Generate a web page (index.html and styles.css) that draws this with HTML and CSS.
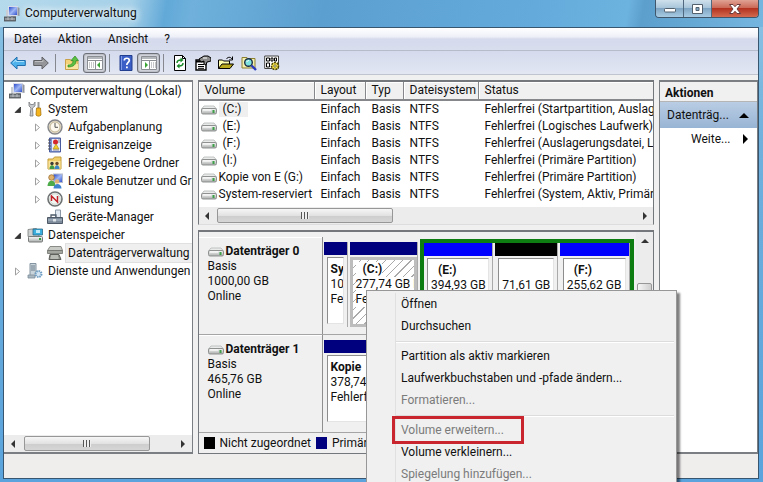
FILE: index.html
```html
<!DOCTYPE html>
<html lang="de">
<head>
    <meta charset="UTF-8">
    <meta name="viewport" content="width=device-width, initial-scale=1.0">
    <title>Computerverwaltung</title>
    <link rel="stylesheet" href="styles.css">
</head>
<body>
    <!-- shared icons -->
    <svg class="sprite" aria-hidden="true">
        <defs>
            <linearGradient id="metal" x1="0" y1="0" x2="0" y2="1">
                <stop offset="0" stop-color="#fafafa"/>
                <stop offset="1" stop-color="#a9abab"/>
            </linearGradient>
            <linearGradient id="sky" x1="0" y1="0" x2="1" y2="1">
                <stop offset="0" stop-color="#1d3fc4"/>
                <stop offset="0.5" stop-color="#9fb6f5"/>
                <stop offset="1" stop-color="#2546c8"/>
            </linearGradient>
        </defs>
        <symbol id="drive" viewBox="0 0 16 10">
            <path d="M3 1h10l2.500 3H.5z" fill="#e9eaea" stroke="#b4b6b6" stroke-width=".8"/>
            <rect x=".5" y="3.500" width="15" height="5.500" rx="1.500" fill="url(#metal)" stroke="#8f9191"/>
            <rect x="11.500" y="5" width="2" height="3" fill="#3fa04a"/>
            <path d="M2 5h8" stroke="#fff"/>
        </symbol>
        <symbol id="computer" viewBox="0 0 16 16">
            <rect x="4.500" y=".5" width="9" height="9" fill="url(#sky)" stroke="#d8dcea"/>
            <path d="M13.500 1l2 1v8l-2-.5z" fill="#8f949e"/>
            <path d="M7 10h5v2H7z" fill="#9a9fa8"/>
            <path d="M2 4h2v7H2z" fill="#c9cdd4"/>
            <rect x=".5" y="11" width="11" height="4" fill="#70757a" stroke="#4d5255" stroke-width=".8"/>
            <path d="M1 13h10M4 11v3M8 11v3" stroke="#c8ccce" stroke-width=".8"/>
        </symbol>
    </svg>

    <div class="window">
        <header class="titlebar">
            <svg class="icon"><use href="#computer"/></svg>
            <h1 class="title">Computerverwaltung</h1>
            <div class="window-buttons">
                <button class="win-btn" aria-label="Minimieren"><svg width="14" height="10" viewBox="0 0 14 10"><rect x="1.500" y="4.500" width="11" height="3.500" rx="1" fill="#fff" stroke="#53606e"/></svg></button>
                <button class="win-btn" aria-label="Maximieren"><svg width="14" height="12" viewBox="0 0 14 12"><path fill-rule="evenodd" d="M1.500 1.500h10v9h-10zM5 4.500h3v3H5z" fill="#fff" stroke="#53606e"/></svg></button>
                <button class="win-btn win-close" aria-label="Schließen"><svg width="14" height="12" viewBox="0 0 14 12"><path d="M1.500 1.500h3.500L7 3.700l2-2.200h3.500L9 6l3.500 4.500H9L7 8.300l-2 2.200H1.500L5 6z" fill="#fff" stroke="#6b3a3a"/></svg></button>
            </div>
        </header>

        <div class="client">
            <nav class="menubar">
                <button>Datei</button>
                <button>Aktion</button>
                <button>Ansicht</button>
                <button>?</button>
            </nav>

            <div class="toolbar">
                <button class="tool" aria-label="Zurück"><svg class="icon" viewBox="0 0 16 16"><path d="M.7 8L7 2v3.500h8.300v5H7V14z" fill="#4fb2ea" stroke="#1f6fae"/><path d="M3 7.500L6 5v1.500h8" fill="none" stroke="#a9e0fb"/></svg></button>
                <button class="tool" aria-label="Vorwärts"><svg class="icon" viewBox="0 0 16 16"><path d="M15.300 8L9 2v3.500H.7v5H9V14z" fill="#949699" stroke="#5f6164"/><path d="M2 6.500h8V5" fill="none" stroke="#bcbec0"/></svg></button>
                <span class="tool-sep"></span>
                <button class="tool" aria-label="Nach oben"><svg class="icon" viewBox="0 0 16 16"><path d="M1.500 4.500h5l1 1.500h6.500v8.500h-12.500z" fill="#f3d27a" stroke="#c9a14a"/><path d="M2 9h12v5H2z" fill="#fbe6a3"/><path d="M4 10c4 0 5-2 5-4.500H7L11 1l3.500 4.500H12C12 10 9 12 4 12z" fill="#5cc043" stroke="#2f8a22" stroke-width=".7"/></svg></button>
                <button class="tool pressed" aria-label="Konsolenstruktur"><svg class="icon" viewBox="0 0 16 16"><path d="M.5 1.500h15v13H.5z" fill="#fff" stroke="#8b8e92"/><path d="M1 2h14v2H1z" fill="#b4b8bd"/><path d="M1 5.500h14M8.500 6v8" stroke="#8b8e92"/><path d="M2 8h5M2 10h5M2 12h5" stroke="#8b8e92" stroke-dasharray="1 1"/><path d="M13 7v6l-3-3z" fill="#3aa535"/></svg></button>
                <span class="tool-sep"></span>
                <button class="tool" aria-label="Hilfe"><svg class="icon" viewBox="0 0 16 16"><path d="M2 .5h12v15H2z" fill="#3b5fc6" stroke="#223f8f"/><path d="M3.500 1v14" stroke="#7f9ae6"/><path d="M6.300 5.500c0-3 5-3 5 0 0 1.800-2.500 2-2.500 4.500" fill="none" stroke="#fff" stroke-width="1.700"/><path d="M8 11.500h1.800v1.800H8z" fill="#fff"/></svg></button>
                <button class="tool pressed" aria-label="Aktionsbereich"><svg class="icon" viewBox="0 0 16 16"><path d="M.5 1.500h15v13H.5z" fill="#fff" stroke="#8b8e92"/><path d="M1 2h14v2H1z" fill="#b4b8bd"/><path d="M1 5.500h14M8.500 6v8" stroke="#8b8e92"/><path d="M10 8h5M10 10h5M10 12h5" stroke="#8b8e92" stroke-dasharray="1 1"/><path d="M4 7v6l3-3z" fill="#3aa535"/></svg></button>
                <span class="tool-sep"></span>
                <button class="tool" aria-label="Aktualisieren"><svg class="icon" viewBox="0 0 16 16"><path d="M2.500.5h8l3 3v12h-11z" fill="#fff" stroke="#000"/><path d="M10.500.5v3h3" fill="none" stroke="#000"/><path d="M5 8c0-2.500 2-3 4-3M11 8c0 2.500-2 3-4 3" fill="none" stroke="#1c8b2c" stroke-width="1.500"/><path d="M8.500 2.500v5l3-2.500zM7.500 8.500v5l-3-2.500z" fill="#1c8b2c"/></svg></button>
                <button class="tool" aria-label="Eigenschaften"><svg class="icon" viewBox="0 0 16 16"><path d="M1 5h10v10H1z" fill="#fff" stroke="#000" stroke-width="1.400"/><path d="M1 6.500h10" stroke="#000" stroke-width="2"/><path d="M3 9.500h6M3 11.500h6M3 13.300h6" stroke="#000"/><path d="M4 4l5-3h4l3 2v3l-4 1-1 3-2-1V6l-3 1z" fill="#8c8c8c" stroke="#000"/><path d="M8 3h4" stroke="#fff"/></svg></button>
                <button class="tool" aria-label="Öffnen"><svg class="icon" viewBox="0 0 16 16"><path d="M.5 13.500V5h4l1 1h6v3" fill="#ffffb0" stroke="#000"/><path d="M.5 13.500L4 9h11.500L12 13.500z" fill="#b9a91c" stroke="#000"/><path d="M8.500 4c1-2 4-2.500 5.500 0M14.500 1.500V5H11" fill="none" stroke="#000"/></svg></button>
                <button class="tool" aria-label="Suchen"><svg class="icon" viewBox="0 0 16 16"><path d="M1 2.500h5l1 1h7v9.500H1z" fill="#f4efae" stroke="#8d8130"/><circle cx="7.500" cy="7.500" r="3.800" fill="#7fe3e0" stroke="#1b2f47" stroke-width="1.400"/><path d="M6 7c0-1 1-1.500 2-1.500" stroke="#fff" fill="none"/><path d="M10.500 10.500l4.500 4.500" stroke="#2b3bbd" stroke-width="2.400"/></svg></button>
                <button class="tool" aria-label="Einstellungen"><svg class="icon" viewBox="0 0 16 16"><path d="M.7 1h13.800v12.500H.7z" fill="#fff" stroke="#444"/><path d="M2.500 3h3v3h-3zM7 3h2v3H7zM10.500 3h2v3h-2zM2.500 8h3v4h-3z" fill="#fff" stroke="#000"/><circle cx="11" cy="11" r="3.500" fill="#f5e34b" stroke="#4a4200" stroke-dasharray="2 1" stroke-width="1.600"/><circle cx="11" cy="11" r="1.200" fill="#fff" stroke="#4a4200" stroke-width=".7"/></svg></button>
            </div>

            <main class="panes">
                <!-- console tree -->
                <section class="pane tree-pane">
                    <ul class="tree">
                        <li class="node root"><svg class="icon"><use href="#computer"/></svg><span>Computerverwaltung (Lokal)</span></li>
                        <li class="node"><i class="twisty open"></i><svg class="icon" viewBox="0 0 16 16"><path d="M2 1v4l2 2-1 8h3l-.5-8L8 5V1L6.500 3.500h-3z" fill="#c7cacd" stroke="#77797c" stroke-width=".8"/><path d="M10.500 1h2v6h-2z" fill="#999"/><path d="M9.500 7h4l.5 7c-1 1.500-4 1.500-5 0z" fill="#f5b51e" stroke="#a9730a" stroke-width=".8"/></svg><span>System</span></li>
                        <li class="node deep"><i class="twisty"></i><svg class="icon" viewBox="0 0 16 16"><circle cx="8" cy="8" r="7" fill="#e3dccb" stroke="#85868a" stroke-width="1.400"/><circle cx="8" cy="8" r="5" fill="#fdf9ee" stroke="#c3b594"/><path d="M8 4v4.300h3" fill="none" stroke="#555"/></svg><span>Aufgabenplanung</span></li>
                        <li class="node deep"><i class="twisty"></i><svg class="icon" viewBox="0 0 16 16"><path d="M2.500 1h11v14h-11z" fill="#7d93d4" stroke="#4b5c9e"/><path d="M5 2h8v12H5z" fill="#e8edfa"/><path d="M1 3h3M1 6h3M1 9h3M1 12h3" stroke="#505050"/><path d="M6 13h6M11 3h2M11 5h2" stroke="#889"/><circle cx="8.500" cy="5" r="2.500" fill="#d4262c"/><path d="M9 7l3 5H6z" fill="#f2cb2e" stroke="#a98a10" stroke-width=".6"/></svg><span>Ereignisanzeige</span></li>
                        <li class="node deep"><i class="twisty"></i><svg class="icon" viewBox="0 0 16 16"><path d="M1 4h5l1.500-2H14v12H1z" fill="#f0ce6a" stroke="#c39a39"/><path d="M1.500 6h12v8h-12z" fill="#fae39a"/><circle cx="5" cy="8.500" r="1.700" fill="#3c3c38"/><circle cx="10" cy="8.500" r="1.700" fill="#6d4a25"/><path d="M2.500 14c0-5 5-5 5 0z" fill="#3f9b45"/><path d="M7.500 14c0-5 5-5 5 0z" fill="#3d87c9"/></svg><span>Freigegebene Ordner</span></li>
                        <li class="node deep"><i class="twisty"></i><svg class="icon" viewBox="0 0 16 16"><rect x="6.500" y="1" width="9" height="8.500" fill="url(#sky)" stroke="#b6bccb"/><circle cx="4.500" cy="4.500" r="2.800" fill="#e1b36d" stroke="#8f6428" stroke-width=".7"/><path d="M.5 13c0-7 8-7 8 0z" fill="#4dab49"/><circle cx="10" cy="8.500" r="2.300" fill="#dfb279"/><path d="M6.500 15.500c0-6 8-6 8 0z" fill="#3f83cf"/></svg><span>Lokale Benutzer und Gruppen</span></li>
                        <li class="node deep"><i class="twisty"></i><svg class="icon" viewBox="0 0 16 16"><circle cx="8" cy="8" r="7" fill="#fff" stroke="#6e7272" stroke-width="1.600"/><circle cx="8" cy="8" r="5.300" fill="#f3f7f3" stroke="#b6c1b6" stroke-width=".7"/><path d="M4.500 10V5l6 6V5" fill="none" stroke="#c22026" stroke-width="1.500"/></svg><span>Leistung</span></li>
                        <li class="node deep"><i class="twisty none"></i><svg class="icon" viewBox="0 0 16 16"><path d="M8.500 1h5v8h-5z" fill="#dfe7f1" stroke="#8a97a5"/><path d="M4 9V6h5v3" fill="none" stroke="#4e5b69" stroke-width="1.300"/><path d="M.5 8.500h15v6H.5z" fill="#7d8b9b" stroke="#4d5966"/><path d="M1 11h14" stroke="#b7c4d0"/><path d="M6 10h3v2.500H6z" fill="#dfe4e8"/></svg><span>Geräte-Manager</span></li>
                        <li class="node"><i class="twisty open"></i><svg class="icon" viewBox="0 0 16 16"><path d="M1 2.500l8-1 3 2v6H1z" fill="#cdd0cf" stroke="#777b7a" stroke-width=".8"/><path d="M6 2h9.500v6H6z" fill="#3bb0df" stroke="#2a6a88" stroke-width=".8"/><path d="M9 3h4v3H9z" fill="#bfeafa"/><rect x="1.500" y="9.500" width="14" height="5.500" rx="1" fill="url(#metal)" stroke="#777b7a"/><path d="M12 12h2" stroke="#2f9e3d" stroke-width="2"/></svg><span>Datenspeicher</span></li>
                        <li class="node deep"><i class="twisty none"></i><svg class="icon" viewBox="0 0 16 16"><path d="M3 1.500h11l1.500 4H.5z" fill="#c9cbc7" stroke="#8a8c87"/><path d="M.5 5.500h15v3H.5z" fill="#a3a59f" stroke="#6f716c" stroke-width=".8"/><path d="M3 9.500h9l2 5H2z" fill="#8d9089" stroke="#5f615c"/><path d="M4 11h7M3.500 13h8" stroke="#e4e6e0"/></svg><span class="current">Datenträgerverwaltung</span></li>
                        <li class="node"><i class="twisty"></i><svg class="icon" viewBox="0 0 16 16"><path d="M3 .5h6v12H3z" fill="#c9d3da" stroke="#8494a0"/><path d="M4 3h4M4 5h4M4 7h4" stroke="#6c7f8d"/><path d="M1 12h7v3H1z" fill="#aab8c2" stroke="#7c8d99" stroke-width=".8"/><circle cx="11.500" cy="11" r="3" fill="#d4e6f4" stroke="#6f9cc0" stroke-width="2" stroke-dasharray="1.500 .8"/></svg><span>Dienste und Anwendungen</span></li>
                    </ul>
                    <div class="hscroll">
                        <button class="arrow left" aria-label="Nach links"></button>
                        <div class="track"><span class="thumb tree-thumb"></span></div>
                        <button class="arrow right" aria-label="Nach rechts"></button>
                    </div>
                </section>

                <div class="center">
                    <!-- volume list -->
                    <section class="volume-pane">
                        <div class="table-wrap">
                            <table class="volumes">
                                <thead>
                                    <tr><th class="c-volume">Volume</th><th class="c-layout">Layout</th><th class="c-typ">Typ</th><th class="c-fs">Dateisystem</th><th>Status</th></tr>
                                </thead>
                                <tbody>
                                    <tr><td><svg class="drive"><use href="#drive"/></svg><span class="letter current">(C:)</span></td><td>Einfach</td><td>Basis</td><td>NTFS</td><td>Fehlerfrei (Startpartition, Auslagerungsdatei)</td></tr>
                                    <tr><td><svg class="drive"><use href="#drive"/></svg><span class="letter">(E:)</span></td><td>Einfach</td><td>Basis</td><td>NTFS</td><td>Fehlerfrei (Logisches Laufwerk)</td></tr>
                                    <tr><td><svg class="drive"><use href="#drive"/></svg><span class="letter">(F:)</span></td><td>Einfach</td><td>Basis</td><td>NTFS</td><td>Fehlerfrei (Auslagerungsdatei, Logisches Laufwerk)</td></tr>
                                    <tr><td><svg class="drive"><use href="#drive"/></svg><span class="letter">(I:)</span></td><td>Einfach</td><td>Basis</td><td>NTFS</td><td>Fehlerfrei (Primäre Partition)</td></tr>
                                    <tr><td><svg class="drive"><use href="#drive"/></svg><span>Kopie von E (G:)</span></td><td>Einfach</td><td>Basis</td><td>NTFS</td><td>Fehlerfrei (Primäre Partition)</td></tr>
                                    <tr><td><svg class="drive"><use href="#drive"/></svg><span>System-reserviert</span></td><td>Einfach</td><td>Basis</td><td>NTFS</td><td>Fehlerfrei (System, Aktiv, Primäre Partition)</td></tr>
                                </tbody>
                            </table>
                        </div>
                        <div class="hscroll">
                            <button class="arrow left" aria-label="Nach links"></button>
                            <div class="track"><span class="thumb list-thumb"></span></div>
                            <button class="arrow right" aria-label="Nach rechts"></button>
                        </div>
                    </section>

                    <!-- graphical disk view -->
                    <section class="disk-pane">
                        <div class="disk-area">
                            <div class="disks">
                                <article class="disk">
                                    <div class="disk-label">
                                        <h2><svg class="drive"><use href="#drive"/></svg>Datenträger 0</h2>
                                        <p>Basis</p>
                                        <p>1000,00 GB</p>
                                        <p>Online</p>
                                    </div>
                                    <div class="parts">
                                        <div class="part primary p-system"><div class="box"><b>System-reserviert</b><p>100 MB NTFS</p><p>Fehlerfrei</p></div></div>
                                        <div class="part primary p-c selected"><div class="box"><b class="drive-letter">(C:)</b><p>277,74 GB NTFS</p><p>Fehlerfrei</p></div></div>
                                        <div class="extended">
                                            <div class="part logical p-e"><div class="box"><b class="drive-letter">(E:)</b><p>394,93 GB</p></div></div>
                                            <div class="part free p-free"><div class="box"><b>&nbsp;</b><p>71,61 GB</p></div></div>
                                            <div class="part logical p-f"><div class="box"><b class="drive-letter">(F:)</b><p>255,62 GB</p></div></div>
                                        </div>
                                    </div>
                                </article>
                                <article class="disk">
                                    <div class="disk-label">
                                        <h2><svg class="drive"><use href="#drive"/></svg>Datenträger 1</h2>
                                        <p>Basis</p>
                                        <p>465,76 GB</p>
                                        <p>Online</p>
                                    </div>
                                    <div class="parts">
                                        <div class="part primary p-copy"><div class="box"><b>Kopie</b><p>378,74 GB</p><p>Fehlerfrei</p></div></div>
                                    </div>
                                </article>
                            </div>
                            <div class="vscroll">
                                <button class="arrow up" aria-label="Nach oben"></button>
                                <span class="vthumb"></span>
                            </div>
                        </div>
                        <div class="legend">
                            <span class="key key-free"></span>Nicht zugeordnet
                            <span class="key key-primary"></span>Primäre Partition
                        </div>
                    </section>
                </div>

                <!-- actions -->
                <aside class="pane actions">
                    <h2 class="actions-title">Aktionen</h2>
                    <button class="action-head">Datenträg...<i class="tri-up"></i></button>
                    <button class="action-item">Weite...<i class="tri-right"></i></button>
                </aside>
            </main>

            <footer class="statusbar"></footer>
        </div>
    </div>

    <div class="context-menu" role="menu">
        <button role="menuitem">Öffnen</button>
        <button role="menuitem">Durchsuchen</button>
        <hr>
        <button role="menuitem">Partition als aktiv markieren</button>
        <button role="menuitem">Laufwerkbuchstaben und -pfade ändern...</button>
        <button role="menuitem" disabled>Formatieren...</button>
        <hr>
        <button role="menuitem" class="marked" disabled>Volume erweitern...</button>
        <button role="menuitem">Volume verkleinern...</button>
        <button role="menuitem" disabled>Spiegelung hinzufügen...</button>
    </div>
</body>
</html>
```
FILE: styles.css
```css
* {
    box-sizing: border-box;
}
body {
    margin: 0;
    height: 100vh;
    position: relative;
    overflow: hidden;
    font-family: Roboto, "Open Sans", sans-serif;
    font-size: 12px;
    line-height: 15px;
    color: #111;
}
button {
    font: inherit;
    color: inherit;
    background: none;
    border: 0;
    padding: 0;
}
h1, h2, p, ul {
    margin: 0;
    padding: 0;
    font-size: inherit;
}
.sprite {
    position: absolute;
    width: 0;
    height: 0;
}
.icon {
    width: 16px;
    height: 16px;
    flex: none;
}
.drive {
    width: 16px;
    height: 10px;
    flex: none;
}

/* window frame */
.window {
    height: 100%;
    display: flex;
    flex-direction: column;
    padding: 0 4px 3px 3px;
    background: linear-gradient(#8cc3e4, #6fb0dd 30%, #5aa3dc);
}
.titlebar {
    height: 27px;
    flex: none;
    display: flex;
    align-items: center;
    gap: 5px;
    margin: 0 -4px 0 -3px;
    padding: 0 4px;
    background: linear-gradient(100deg, #b5daec, #a5d0e8 130px, #62a9d8 165px, #6fb1dc 190px, #5b9fd0 320px, #64abdc 70%, #6db3df 82%, #5c9fcd 84%, #74b6df);
}
.title {
    flex: 1;
    font-weight: normal;
    text-shadow: 0 0 6px #fff, 0 0 8px #fff;
}
.window-buttons {
    display: flex;
    align-self: flex-start;
    border: 1px solid #3f566b;
    border-top: 0;
    border-radius: 0 0 4px 4px;
    overflow: hidden;
}
.win-btn {
    width: 28px;
    height: 17px;
    display: flex;
    align-items: center;
    justify-content: center;
    background: linear-gradient(#cfe0ec, #a9c5da 45%, #7fa5c4 50%, #a9cce3);
    border-right: 1px solid #51697e;
}
.win-close {
    width: 46px;
    border-right: 0;
    background: linear-gradient(#e0a294, #cc6a58 45%, #b33320 50%, #d36a4f);
}
.client {
    flex: 1;
    min-height: 0;
    display: flex;
    flex-direction: column;
    background: #f0f0f0;
    border: 1px solid #38566f;
}
.menubar {
    height: 23px;
    flex: none;
    display: flex;
    align-items: center;
    gap: 16px;
    padding-left: 10px;
    background: linear-gradient(#fff, #eef0f8 40%, #d5daec 50%, #d8deee);
    border-bottom: 1px solid #b7bccb;
}
.toolbar {
    height: 24px;
    flex: none;
    display: flex;
    align-items: center;
    padding-left: 2px;
    background: linear-gradient(#d5dbed, #e2e6f3);
    border-bottom: 1px solid #c0c4cf;
}
.tool {
    width: 23px;
    height: 20px;
    display: flex;
    align-items: center;
    justify-content: center;
}
.tool.pressed {
    background: #d3d6df;
    border: 1px solid #6d7078;
    border-radius: 3px;
    box-shadow: inset 0 0 2px #888;
}
.tool-sep {
    width: 1px;
    height: 18px;
    margin: 0 4px 0 3px;
    background: #85898f;
}

/* panes */
.panes {
    flex: 1;
    min-height: 0;
    display: flex;
    padding-top: 5px;
}
.pane {
    background: #fff;
    border: 2px solid #7b7e82;
    border-left-width: 1px;
    border-right-width: 1px;
    display: flex;
    flex-direction: column;
    overflow: hidden;
}
.tree-pane {
    width: 25%;
    flex: none;
    border-left: 0;
}
.tree {
    flex: 1;
    list-style: none;
    overflow: hidden;
}
.node {
    height: 18px;
    display: flex;
    align-items: center;
    white-space: nowrap;
    padding-left: 8px;
    gap: 3px;
}
.node span {
    padding: 0 2px;
}
.node.root {
    padding-left: 5px;
}
.node.deep {
    padding-left: 28px;
}
.node .current {
    line-height: 18px;
    background: #efefef;
    box-shadow: 0 0 0 1px #e0e0e0;
}
.twisty {
    width: 12px;
    height: 9px;
    flex: none;
    background: url("data:image/svg+xml,%3Csvg xmlns='http://www.w3.org/2000/svg' width='12' height='9'%3E%3Cpath d='M3.500 1v7l4-3.500z' fill='%23fff' stroke='%23a0a0a0'/%3E%3C/svg%3E") no-repeat;
}
.twisty.open {
    background-image: url("data:image/svg+xml,%3Csvg xmlns='http://www.w3.org/2000/svg' width='12' height='9'%3E%3Cpath d='M8.500 2v5.500H3z' fill='%23333' stroke='%23111' stroke-width='.6'/%3E%3C/svg%3E");
}
.twisty.none {
    background: none;
}

/* scrollbars */
.hscroll {
    height: 17px;
    flex: none;
    display: flex;
    background: #ececec;
}
.arrow {
    width: 17px;
    height: 17px;
    flex: none;
    display: flex;
    align-items: center;
    justify-content: center;
}
.arrow::before {
    content: "";
    border: solid transparent;
}
.arrow.left::before {
    border-width: 4px 4px 4px 0;
    border-right-color: #333;
}
.arrow.right::before {
    border-width: 4px 0 4px 4px;
    border-left-color: #333;
}
.arrow.up::before {
    border-width: 0 4px 4px 4px;
    border-bottom-color: #333;
}
.track {
    flex: 1;
    display: flex;
    align-items: center;
}
.thumb {
    height: 15px;
    display: flex;
    align-items: center;
    justify-content: center;
    background: linear-gradient(#f6f6f6, #e2e2e2 50%, #cdcdcd 52%, #d6d6d6);
    border: 1px solid #979797;
    border-radius: 2px;
}
.thumb::before {
    content: "";
    width: 8px;
    height: 7px;
    background: repeating-linear-gradient(90deg, #555 0 1px, #eee 1px 3px);
}
.tree-thumb {
    width: 82%;
    margin-left: 3px;
}
.list-thumb {
    width: 42%;
    margin-left: 1px;
}

/* volume list */
.center {
    flex: 1;
    min-width: 0;
    display: flex;
    flex-direction: column;
    margin: 0 5px;
}
.volume-pane {
    height: 145px;
    flex: none;
    background: #fff;
    border: 1px solid #74777b;
    border-width: 2px 1px 1px;
    border-bottom-color: #ddd;
    display: flex;
    flex-direction: column;
}
.table-wrap {
    flex: 1;
    overflow: hidden;
}
.volumes {
    width: 100%;
    table-layout: fixed;
    border-collapse: separate;
    border-spacing: 0;
    white-space: nowrap;
}
.volumes th {
    height: 19px;
    padding: 0 6px;
    text-align: left;
    font-weight: normal;
    background: #f0f0f0;
    border-right: 1px solid #85878a;
    border-bottom: 2px solid #85878a;
    box-shadow: inset 1px 1px 0 #fff;
}
.volumes th:last-child {
    border-right: 0;
}
.volumes td {
    height: 17px;
    padding: 0 0 0 6px;
    overflow: hidden;
}
.volumes td:first-child {
    display: flex;
    align-items: center;
    gap: 2px;
    padding-left: 2px;
}
.c-volume {
    width: 116px;
}
.c-layout {
    width: 51px;
}
.c-typ {
    width: 38px;
}
.c-fs {
    width: 75px;
}
.letter {
    padding: 0 6px 0 4px;
}
.letter.current {
    background: #efefef;
}

/* disk view */
.disk-pane {
    flex: 1;
    min-height: 0;
    display: flex;
    flex-direction: column;
    border: 1px solid #74777b;
    border-width: 2px 1px 1px;
    margin-top: 5px;
}
.disk-area {
    flex: 1;
    min-height: 0;
    display: flex;
}
.disks {
    flex: 1;
    min-width: 0;
    padding-top: 5px;
    overflow: hidden;
}
.disk {
    height: 98px;
    display: flex;
    border-bottom: 1px solid #a5a5a5;
}
.disk-label {
    width: 124px;
    flex: none;
    padding: 7px 0 0 9px;
    border-right: 1px solid #8f8f8f;
    box-shadow: inset 0 1px 0 #fff;
}
.disk-label h2 {
    display: flex;
    align-items: center;
    gap: 2px;
}
.parts {
    flex: 1;
    min-width: 0;
    display: flex;
    gap: 2px;
    padding: 2px 2px 4px 1px;
}
.part {
    min-width: 0;
    margin: 3px 0;
    display: flex;
    flex-direction: column;
    border-right: 1px solid #aaa;
}
.part::before {
    content: "";
    height: 13px;
    flex: none;
}
.primary::before, .key-primary {
    background: #00007f;
}
.logical::before {
    background: #0000fe;
}
.free::before, .key-free {
    background: #000;
}
.box {
    flex: 1;
    margin: 2px 3px 3px;
    padding: 4px 0 0 3px;
    background: #fff;
    border: 1px solid #8d8d8d;
    border-right-color: #e4e4e4;
    border-bottom-color: #e4e4e4;
    white-space: nowrap;
    overflow: hidden;
}
.box b {
    display: block;
}
.box .drive-letter {
    padding-left: 7px;
}
.selected .box {
    margin: 2px 0 0;
    padding-top: 2px;
    border: 3px solid #bdbdbd;
    background: repeating-linear-gradient(135deg, #fff 0 5px, #aaa 5px 6px);
}
.selected b, .selected p {
    width: fit-content;
    background: #fff;
}
.p-system {
    flex: 24;
}
.p-c {
    flex: 70;
}
.extended {
    flex: 214;
    min-width: 0;
    display: flex;
    gap: 2px;
    border: 4px solid #0d7c11;
}
.extended .part {
    margin: 0;
}
.p-e {
    flex: 69;
}
.p-free {
    flex: 62;
}
.p-f {
    flex: 70;
}
.p-copy {
    flex: 1;
}
.vscroll {
    width: 17px;
    flex: none;
    background: #ececec;
}
.vthumb {
    display: block;
    height: 90px;
    margin: 34px 1px 0;
    background: linear-gradient(90deg, #f6f6f6, #cfcfcf);
    border: 1px solid #979797;
    border-radius: 2px;
}
.legend {
    height: 20px;
    flex: none;
    display: flex;
    align-items: center;
    gap: 5px;
    padding-left: 5px;
    white-space: nowrap;
    overflow: hidden;
}
.key {
    width: 11px;
    height: 12px;
    flex: none;
}

/* actions */
.actions {
    width: 99px;
    flex: none;
}
.actions-title {
    height: 20px;
    line-height: 22px;
    padding-left: 5px;
    background: #f0f0f0;
    border-bottom: 1px solid #b5b5b5;
}
.action-head, .action-item {
    height: 26px;
    display: flex;
    align-items: center;
    justify-content: space-between;
    padding: 0 8px 0 7px;
}
.action-head {
    background: linear-gradient(#b9cde4, #98b4d4);
}
.action-item {
    height: 22px;
    padding: 0 9px 0 31px;
}
.tri-up {
    border: solid transparent;
    border-width: 0 5px 5px;
    border-bottom-color: #000;
}
.tri-right {
    border: solid transparent;
    border-width: 5px 0 5px 5px;
    border-left-color: #000;
}
.statusbar {
    height: 24px;
    flex: none;
    background: #f0eded;
}

/* context menu, opened over the disk view */
.context-menu {
    position: absolute;
    left: 366px;
    top: 290px;
    width: 311px;
    padding: 2px 2px 2px 28px;
    background: #f0f0f0;
    border: 1px solid #979797;
    box-shadow: 3px 3px 2px rgba(0,0,0,0.5);
}
.context-menu button {
    display: block;
    width: 100%;
    height: 22px;
    padding-left: 5px;
    text-align: left;
    border-left: 1px solid #e0e0e0;
}
.context-menu button:disabled {
    color: #7b7b7b;
}
.context-menu hr {
    height: 8px;
    margin: 0;
    border: 0;
    border-left: 1px solid #e0e0e0;
    background: linear-gradient(#f0f0f0 4px, #dcdcdc 4px 5px, #fff 5px 6px, #f0f0f0 6px);
}
.context-menu .marked {
    width: 126px;
    outline: 3px solid #c9252f;
}
```
